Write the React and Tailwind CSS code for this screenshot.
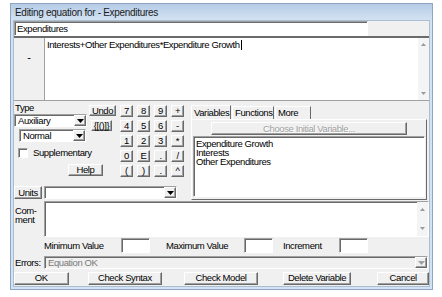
import React from "react";

const raised =
  "border border-t-white border-l-white border-r-[#696969] border-b-[#696969] shadow-[inset_-1px_-1px_0_#a0a0a0]";
const sunken =
  "border border-t-[#a0a0a0] border-l-[#a0a0a0] border-r-white border-b-white shadow-[inset_1px_1px_0_#696969]";

function Btn({ className = "", children, disabled }) {
  return (
    <div
      className={`${raised} bg-[#f0f0f0] flex items-center justify-center leading-none whitespace-nowrap ${
        disabled ? "text-[#a0a0a0]" : "text-black"
      } ${className}`}
    >
      {children}
    </div>
  );
}

function Down({ color = "#000" }) {
  return (
    <svg width="7" height="4" viewBox="0 0 7 4">
      <path d="M0 0h7L3.5 4z" fill={color} />
    </svg>
  );
}

function Select({ className = "", children, disabled }) {
  return (
    <div
      className={`${sunken} ${disabled ? "bg-[#f0f0f0] text-[#7a7a7a]" : "bg-white"} flex items-stretch ${className}`}
    >
      <span className="flex-1 pl-[3px] leading-none flex items-center truncate">{children}</span>
      <div className={`${raised} w-[12px] bg-[#f0f0f0] flex items-center justify-center`}>
        <Down color={disabled ? "#a0a0a0" : "#000"} />
      </div>
    </div>
  );
}

function ScrollBar({ pad = "py-[5px]" }) {
  return (
    <div className={`w-[11px] bg-[#f4f4f4] flex flex-col justify-between items-center ${pad}`}>
      <svg width="5" height="3" viewBox="0 0 5 3">
        <path d="M0 3h5L2.5 0z" fill="#9a9a9a" />
      </svg>
      <svg width="5" height="3" viewBox="0 0 5 3">
        <path d="M0 0h5L2.5 3z" fill="#9a9a9a" />
      </svg>
    </div>
  );
}

const keys = ["7", "8", "9", "+", "4", "5", "6", "-", "1", "2", "3", "*", "0", "E", ".", "/", "(", ")", ".", "^"];

const tab = "border-l border-t border-white border-r border-r-[#696969] px-[2px] leading-none flex items-center";

export default function App() {
  return (
    <div className="w-[442px] h-[297px] bg-white overflow-hidden pt-[3px] pl-[10px] font-['Liberation_Sans',Arial,sans-serif] text-[9.5px] tracking-[-0.4px] text-black">
      <div className="w-[423px] h-[287px] border border-[#8ea6c2] bg-[#d3e2f2] flex flex-col">
        {/* title */}
        <div className="h-[17px] bg-gradient-to-b from-[#b5cce6] to-[#d3e2f2] pl-[4px] pt-[1px] flex items-center text-[#1b1b1b] text-[10px] tracking-[-0.3px]">
          Editing equation for - Expenditures
        </div>
        {/* body */}
        <div className="flex-1 mx-[2px] mb-[2px] bg-[#f0f0f0] border border-[#a9bdd3] flex flex-col">
          {/* name row */}
          <div className="h-[15px] flex">
            <div className={`${sunken} bg-white w-[354px] flex items-center pl-[2px] leading-none`}>Expenditures</div>
          </div>
          {/* equation */}
          <div className="h-[64px] flex border-t-2 border-[#6b6b6b]">
            <div className="w-[30px] flex justify-center pt-[11px] text-[11px]">-</div>
            <div className="flex-1 bg-white border-l border-[#a0a0a0] flex">
              <div className="flex-1 pl-[2px] pt-[2px] leading-none">
                Interests+Other Expenditures*Expenditure Growth
                <span className="inline-block w-px h-[10px] bg-black align-middle ml-px" />
              </div>
              <ScrollBar />
            </div>
          </div>
          {/* middle */}
          <div className="h-[101px] flex border-t border-[#a0a0a0]">
            <div className="w-[176px] flex flex-col">
              <div className="flex-1 flex">
                <div className="w-[103px] flex flex-col">
                  <div className="flex">
                    <div className="w-[75px] flex flex-col">
                      <div className="h-[9px] pl-[1px] leading-none mt-[2px]">Type</div>
                      <Select className="h-[13px] w-[73px] mt-[2px]">Auxiliary</Select>
                      <Select className="h-[13px] w-[67px] ml-[5px] mt-[2px]">Normal</Select>
                    </div>
                    <div className="flex flex-col items-start pt-[4px]">
                      <Btn className="w-[27px] h-[11px]">Undo</Btn>
                      <Btn className="w-[21px] h-[11px] ml-[2px] mt-[4px]">{"{[()]}"}</Btn>
                    </div>
                  </div>
                  <div className="flex items-center mt-[6px] ml-[4px]">
                    <div className={`${sunken} bg-white w-[10px] h-[10px]`} />
                    <span className="ml-[5px] leading-none">Supplementary</span>
                  </div>
                  <Btn className="w-[35px] h-[12px] ml-[54px] mt-[6px]">Help</Btn>
                </div>
                <div className="grid grid-cols-4 gap-x-[4px] gap-y-[3px] mt-[4px] ml-[3px] h-fit">
                  {keys.map((k, i) => (
                    <Btn key={i} className="w-[13px] h-[12px]">
                      {k}
                    </Btn>
                  ))}
                </div>
              </div>
              <div className="h-[15px] flex items-center mb-[1px]">
                <Btn className="w-[28px] h-[13px]">Units</Btn>
                <Select className="h-[13px] w-[133px] ml-[2px]"></Select>
              </div>
            </div>
            <div className="flex-1 flex flex-col pt-[4px] pl-[1px]">
              <div className="flex h-[14px] items-end">
                <div className={`${tab} h-[14px] w-[40px]`}>Variables</div>
                <div className={`${tab} h-[13px] w-[42px] ml-[1px]`}>Functions</div>
                <div className={`${tab} h-[13px] w-[36px] ml-[1px]`}>More</div>
              </div>
              <div className="flex-1 border border-l-white border-t-white border-r-[#696969] border-b-[#696969] mr-[2px] mb-[1px] flex flex-col pt-[2px] px-[1px] pb-[2px]">
                <Btn disabled className="h-[13px] w-[196px] ml-[18px] text-[#a0a0a0] [text-shadow:1px_1px_0_#fff]">
                  Choose Initial Variable...
                </Btn>
                <div className={`${sunken} bg-white flex-1 mt-[1px] pl-[2px] pt-[2px] text-[9.5px] leading-[9px]`}>
                  <div>Expenditure Growth</div>
                  <div>Interests</div>
                  <div>Other Expenditures</div>
                </div>
              </div>
            </div>
          </div>
          {/* comment */}
          <div className="h-[36px] flex">
            <div className="w-[30px] pl-[1px] pt-[5px] leading-[9px]">
              Com-
              <br />
              ment
            </div>
            <div className={`${sunken} flex-1 bg-white flex justify-end`}>
              <ScrollBar pad="py-[6px]" />
            </div>
          </div>
          {/* min max */}
          <div className="h-[17px] flex items-center">
            <span className="ml-[30px] w-[77px] leading-none">Minimum Value</span>
            <div className={`${sunken} bg-white w-[29px] h-[15px]`} />
            <span className="ml-[16px] w-[78px] leading-none">Maximum Value</span>
            <div className={`${sunken} bg-white w-[29px] h-[15px]`} />
            <span className="ml-[10px] w-[56px] leading-none">Increment</span>
            <div className={`${sunken} bg-white w-[29px] h-[15px]`} />
          </div>
          {/* errors */}
          <div className="h-[15px] flex items-center mt-[1px]">
            <span className="w-[30px] pl-px leading-none">Errors:</span>
            <Select disabled className="flex-1 h-[13px] mr-[1px]">
              Equation OK
            </Select>
          </div>
          {/* buttons */}
          <div className="h-[16px] flex items-center">
            <Btn className="w-[55px] h-[13px]">OK</Btn>
            <Btn className="w-[75px] h-[13px] ml-[19px]">Check Syntax</Btn>
            <Btn className="w-[74px] h-[13px] ml-[22px]">Check Model</Btn>
            <Btn className="w-[69px] h-[13px] ml-[25px]">Delete Variable</Btn>
            <Btn className="w-[52px] h-[13px] ml-[26px]">Cancel</Btn>
          </div>
        </div>
      </div>
    </div>
  );
}
